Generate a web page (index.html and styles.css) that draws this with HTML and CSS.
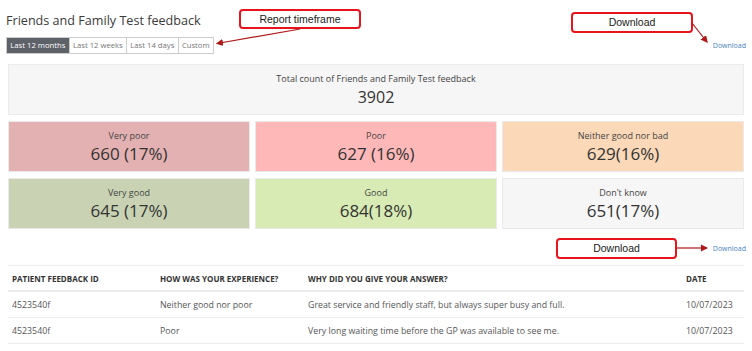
FILE: index.html
```html
<!DOCTYPE html>
<html lang="en">
<head>
  <meta charset="UTF-8" />
  <title>Friends and Family Test feedback</title>
  <link rel="stylesheet" href="styles.css">
</head>
<body>
  <div class="page">
    <div class="top">
      <div>
        <h1 class="title">Friends and Family Test feedback</h1>
        <div class="tabs">
          <span class="tab active">Last 12 months</span>
          <span class="tab">Last 12 weeks</span>
          <span class="tab">Last 14 days</span>
          <span class="tab">Custom</span>
        </div>
      </div>
      <a class="link" href="#">Download</a>
    </div>

    <div class="total">
      <div class="label">Total count of Friends and Family Test feedback</div>
      <div class="value total-value">3902</div>
    </div>

    <div class="cards">
      <div class="card very-poor"><div class="label">Very poor</div><div class="value">660 (17%)</div></div>
      <div class="card poor"><div class="label">Poor</div><div class="value">627 (16%)</div></div>
      <div class="card neither"><div class="label">Neither good nor bad</div><div class="value">629(16%)</div></div>
      <div class="card very-good"><div class="label">Very good</div><div class="value">645 (17%)</div></div>
      <div class="card good"><div class="label">Good</div><div class="value">684(18%)</div></div>
      <div class="card unknown"><div class="label">Don't know</div><div class="value">651(17%)</div></div>
    </div>

    <div class="table-bar">
      <a class="link" href="#">Download</a>
    </div>

    <table class="feedback">
      <thead>
        <tr>
          <th class="c-id">PATIENT FEEDBACK ID</th>
          <th class="c-exp">HOW WAS YOUR EXPERIENCE?</th>
          <th class="c-why">WHY DID YOU GIVE YOUR ANSWER?</th>
          <th>DATE</th>
        </tr>
      </thead>
      <tbody>
        <tr>
          <td>4523540f</td>
          <td>Neither good nor poor</td>
          <td>Great service and friendly staff, but always super busy and full.</td>
          <td>10/07/2023</td>
        </tr>
        <tr>
          <td>4523540f</td>
          <td>Poor</td>
          <td>Very long waiting time before the GP was available to see me.</td>
          <td>10/07/2023</td>
        </tr>
      </tbody>
    </table>
  </div>

  <!-- annotation callouts -->
  <div class="callout callout-timeframe">Report timeframe</div>
  <div class="callout callout-dl-top">Download</div>
  <div class="callout callout-dl-table">Download</div>
  <svg class="arrows" width="752" height="351" viewBox="0 0 752 351">
    <defs>
      <marker id="head" markerWidth="6" markerHeight="6" refX="5" refY="3" orient="auto">
        <path d="M0,0 L6,3 L0,6 Z" fill="#b01818" />
      </marker>
    </defs>
    <line x1="300" y1="29" x2="217" y2="43.5" stroke="#b01818" stroke-width="1.2" marker-end="url(#head)" />
    <line x1="692" y1="23" x2="707" y2="42" stroke="#b01818" stroke-width="1.2" marker-end="url(#head)" />
    <line x1="677" y1="248" x2="707" y2="248" stroke="#b01818" stroke-width="1.2" marker-end="url(#head)" />
  </svg>
</body>
</html>
```

FILE: styles.css
```css
body {
  margin: 0;
  font-family: "Open Sans", sans-serif;
  color: #333;
  background: #fff;
}

.page {
  padding: 0 8px;
}

.top {
  display: flex;
  justify-content: space-between;
  align-items: flex-end;
  height: 54px;
}

.title {
  margin: 9px 0 0 -2px;
  font-size: 12.6px;
  font-weight: 400;
  line-height: 20px;
  color: #3a3a3a;
}

.tabs {
  display: flex;
  margin-top: 6px;
  margin-left: -2px;
  border: 1px solid #ccc;
  width: max-content;
}

.tab {
  font-size: 7.7px;
  line-height: 15px;
  padding: 0 3.3px;
  color: #777;
  border-left: 1px solid #ccc;
}

.tab:first-child {
  border-left: none;
}

.tab.active {
  background: #5d6168;
  color: #fff;
}

.link {
  font-size: 7px;
  color: #4a7fc1;
  text-decoration: none;
  margin-right: -2px;
  margin-bottom: 4px;
}

.total {
  margin-top: 10px;
  height: 51px;
  background: #f6f6f6;
  border: 1px solid #ebebeb;
  text-align: center;
  box-sizing: border-box;
  padding-top: 8px;
}

.label {
  font-size: 9px;
  line-height: 12px;
  color: #444;
}

.value {
  font-size: 17px;
  line-height: 24px;
  color: #333;
}

.total-value {
  font-size: 16px;
}

.cards {
  display: grid;
  grid-template-columns: repeat(3, 1fr);
  gap: 6px 5px;
  margin-top: 6px;
}

.card {
  height: 51px;
  box-sizing: border-box;
  border: 1px solid #eaeaea;
  text-align: center;
  padding-top: 8px;
}

.very-poor { background: #e3b1b1; }
.poor { background: #feb8b8; }
.neither { background: #fad8b8; }
.very-good { background: #c9d3b3; }
.good { background: #d8ebb4; }
.unknown { background: #f6f6f6; }

.table-bar {
  display: flex;
  justify-content: flex-end;
  height: 36px;
  align-items: center;
}

.table-bar .link {
  margin-bottom: 0;
  margin-top: 2px;
}

.feedback {
  width: 100%;
  border-collapse: collapse;
  font-size: 8.8px;
  color: #555;
}

.feedback th {
  text-align: left;
  font-size: 8px;
  font-weight: 700;
  color: #333;
  height: 24px;
  padding: 0 4px;
  border-top: 1px solid #ececec;
  border-bottom: 2px solid #ececec;
}

.feedback td {
  height: 25px;
  padding: 0 4px;
  border-bottom: 1px solid #ececec;
}

.c-id { width: 140px; }
.c-exp { width: 140px; }
.c-why { width: 370px; }

.callout {
  position: absolute;
  box-sizing: border-box;
  border: 2px solid #e8141c;
  border-radius: 4px;
  background: #fff;
  font-family: "Liberation Sans", sans-serif;
  font-size: 10.5px;
  color: #222;
  text-align: center;
  line-height: 16px;
}

.callout-timeframe { left: 239px; top: 9px; width: 122px; height: 20px; }
.callout-dl-top { left: 571px; top: 12px; width: 122px; height: 21px; }
.callout-dl-table { left: 556px; top: 238px; width: 121px; height: 21px; }

.arrows {
  position: absolute;
  left: 0;
  top: 0;
  pointer-events: none;
}
```
